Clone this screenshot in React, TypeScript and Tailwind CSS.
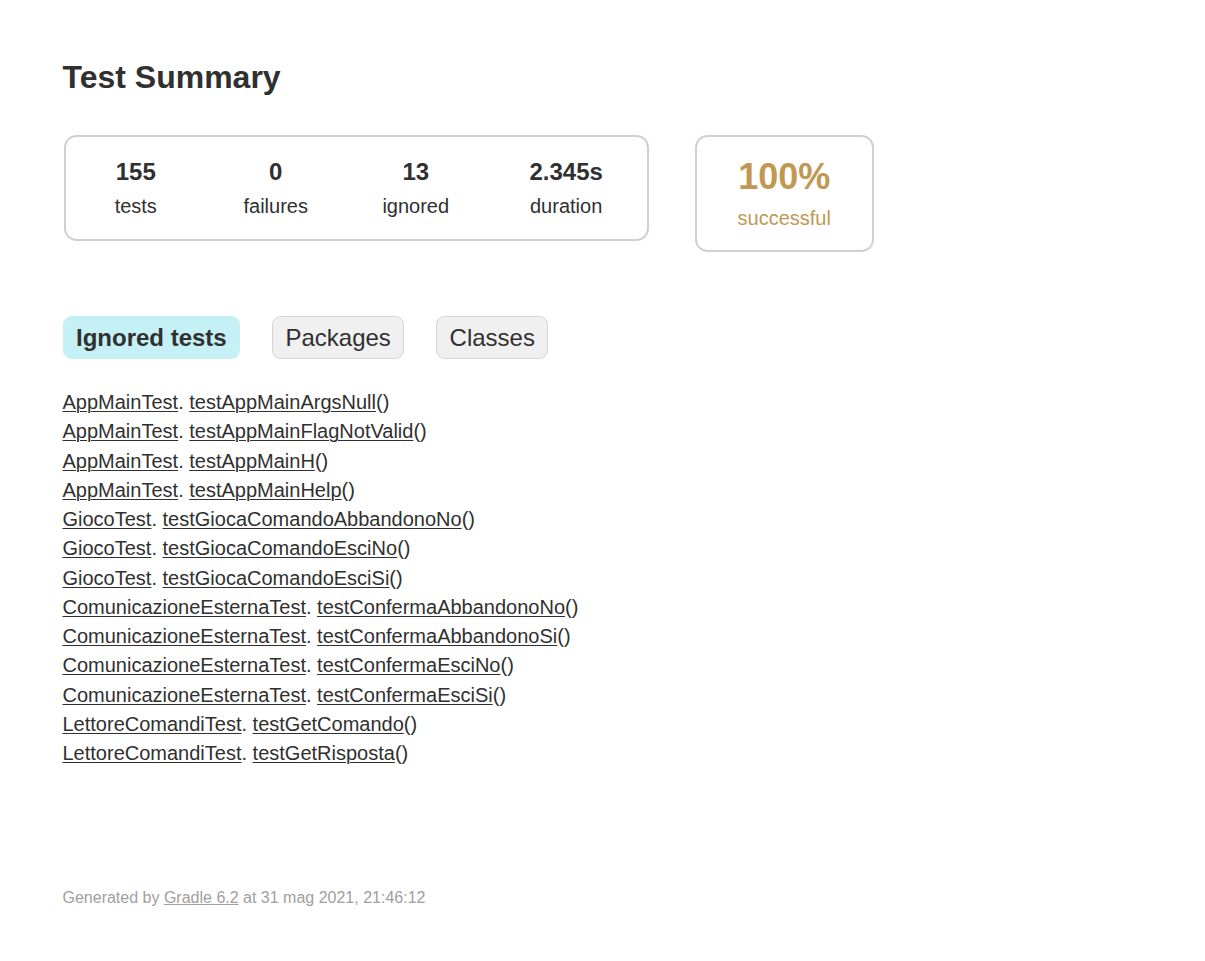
import React from "react";

const ignored: [string, string][] = [
  ["AppMainTest", "testAppMainArgsNull"],
  ["AppMainTest", "testAppMainFlagNotValid"],
  ["AppMainTest", "testAppMainH"],
  ["AppMainTest", "testAppMainHelp"],
  ["GiocoTest", "testGiocaComandoAbbandonoNo"],
  ["GiocoTest", "testGiocaComandoEsciNo"],
  ["GiocoTest", "testGiocaComandoEsciSi"],
  ["ComunicazioneEsternaTest", "testConfermaAbbandonoNo"],
  ["ComunicazioneEsternaTest", "testConfermaAbbandonoSi"],
  ["ComunicazioneEsternaTest", "testConfermaEsciNo"],
  ["ComunicazioneEsternaTest", "testConfermaEsciSi"],
  ["LettoreComandiTest", "testGetComando"],
  ["LettoreComandiTest", "testGetRisposta"],
];

const stats = [
  { v: "155", l: "tests", w: "w-[137.5px]" },
  { v: "0", l: "failures", w: "w-[137.5px]" },
  { v: "13", l: "ignored", w: "w-[137.5px]" },
  { v: "2.345s", l: "duration", w: "w-[158.25px]" },
];

export default function App() {
  return (
    <div className="bg-white min-h-[961px] px-[62.5px] pt-[37.5px] pb-[37.5px] text-[20px] leading-[23px] text-[#303030] font-['Liberation_Sans',Arial,sans-serif]">
      <h1 className="mt-[21.5px] text-[32px] leading-[37px] font-bold whitespace-nowrap">
        Test Summary
      </h1>

      <div className="mt-[37.5px] flex items-start">
        <div className="p-[1.25px]">
          <div className="flex border-[2.5px] border-[#d0d0d0] rounded-[12.5px]">
            {stats.map((s) => (
              <div key={s.l} className="p-[1.25px]">
                <div className={`${s.w} pt-[19.5px] pb-[19.75px] text-center`}>
                  <p className="text-[24px] leading-[27.6px] font-bold mb-[10px]">{s.v}</p>
                  <p>{s.l}</p>
                </div>
              </div>
            ))}
          </div>
        </div>
        <div className="p-[1.25px]">
          <div className="ml-[43.75px] w-[175px] box-content pt-[19.25px] pb-[19.25px] text-center border-[2.5px] border-[#d0d0d0] rounded-[12.5px] text-[#c09853]">
            <p className="text-[36px] leading-[41.4px] font-bold mb-[10px]">100%</p>
            <p>successful</p>
          </div>
        </div>
      </div>

      <ul className="mt-[51px] pt-[12.5px] pb-[12.5px] flex">
        <li className="mr-[31.75px] px-[12.5px] py-[6.25px] rounded-[8.75px] border-[1.25px] border-[#c5f0f5] bg-[#c5f0f5]">
          <span className="block text-[24px] leading-[27.6px] font-bold">Ignored tests</span>
        </li>
        <li className="mr-[31.75px] px-[12.5px] py-[6.25px] rounded-[8.75px] border-[1.25px] border-[#d4d4d4] bg-[#f0f0f0]">
          <span className="block text-[24px] leading-[27.6px]">Packages</span>
        </li>
        <li className="mr-[31.75px] px-[12.5px] py-[6.25px] rounded-[8.75px] border-[1.25px] border-[#d4d4d4] bg-[#f0f0f0]">
          <span className="block text-[24px] leading-[27.6px]">Classes</span>
        </li>
      </ul>

      <ul className="mt-[20px]">
        {ignored.map(([c, m], i) => (
          <li key={i} className="mb-[6.25px] whitespace-nowrap">
            <span className="underline decoration-1 underline-offset-[2px]">{c}</span>.{" "}
            <span className="underline decoration-1 underline-offset-[2px]">{m}</span>()
          </li>
        ))}
      </ul>

      <div className="mt-[124px] text-[16px] leading-[18.4px] text-[#a0a0a0] whitespace-nowrap">
        Generated by <span className="underline">Gradle 6.2</span> at 31 mag 2021, 21:46:12
      </div>
    </div>
  );
}
